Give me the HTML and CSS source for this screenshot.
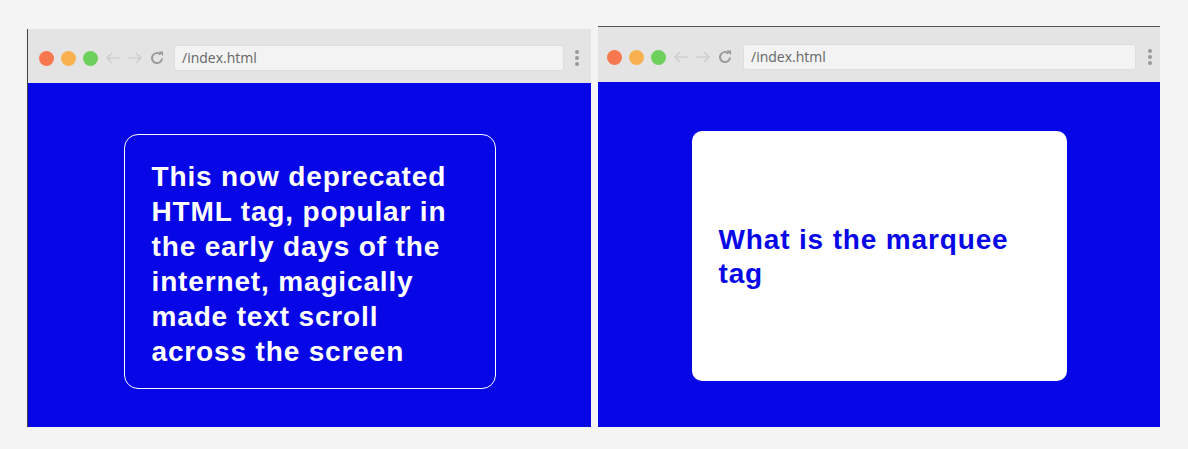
FILE: index.html
```html
<!DOCTYPE html>
<html>
<head>
<meta charset="utf-8">
<link rel="stylesheet" href="styles.css">
</head>
<body>
<div class="row">
  <div class="browser browser-left">
    <div class="chrome">
      <div class="lights"><span class="dot red"></span><span class="dot orange"></span><span class="dot green"></span></div>
      <div class="navs">
        <svg width="16" height="14" viewBox="0 0 16 14"><path d="M15 7H2M7 2L2 7l5 5" fill="none" stroke="#cfcfcf" stroke-width="1.6"/></svg>
        <svg width="16" height="14" viewBox="0 0 16 14"><path d="M1 7h13M9 2l5 5-5 5" fill="none" stroke="#cfcfcf" stroke-width="1.6"/></svg>
        <svg width="16" height="16" viewBox="0 0 16 16"><path d="M13 8.5A5 5 0 1 1 11.5 4.5" fill="none" stroke="#9a9a9a" stroke-width="2"/><path d="M9.5 1.5h4.5v4.5z" fill="#9a9a9a"/></svg>
      </div>
      <div class="url">/index.html</div>
      <div class="kebab"><i></i><i></i><i></i></div>
    </div>
    <div class="viewport">
      <div class="card card-back">This now deprecated HTML tag, popular in the early days of the internet, magically made text scroll across the screen</div>
    </div>
  </div>
  <div class="browser browser-right">
    <div class="chrome">
      <div class="lights"><span class="dot red"></span><span class="dot orange"></span><span class="dot green"></span></div>
      <div class="navs">
        <svg width="16" height="14" viewBox="0 0 16 14"><path d="M15 7H2M7 2L2 7l5 5" fill="none" stroke="#cfcfcf" stroke-width="1.6"/></svg>
        <svg width="16" height="14" viewBox="0 0 16 14"><path d="M1 7h13M9 2l5 5-5 5" fill="none" stroke="#cfcfcf" stroke-width="1.6"/></svg>
        <svg width="16" height="16" viewBox="0 0 16 16"><path d="M13 8.5A5 5 0 1 1 11.5 4.5" fill="none" stroke="#9a9a9a" stroke-width="2"/><path d="M9.5 1.5h4.5v4.5z" fill="#9a9a9a"/></svg>
      </div>
      <div class="url">/index.html</div>
      <div class="kebab"><i></i><i></i><i></i></div>
    </div>
    <div class="viewport">
      <div class="card card-front">What is the marquee tag</div>
    </div>
  </div>
</div>
</body>
</html>
```
FILE: styles.css
```css
* { box-sizing: border-box; }
html, body { margin: 0; padding: 0; }
body {
  background: #f4f4f4;
  width: 1188px;
  height: 449px;
  font-family: "Liberation Sans", Arial, sans-serif;
}
.row {
  display: flex;
  align-items: flex-start;
  gap: 7px;
  padding: 26px 0 0 27px;
}
.browser {
  display: flex;
  flex-direction: column;
}
.browser-left {
  width: 564px;
  height: 398px;
  margin-top: 3px;
  border-left: 1px solid #444;
}
.browser-right {
  width: 562px;
  height: 401px;
  border-top: 1px solid #555;
}
.chrome {
  background: #e4e4e4;
  height: 54px;
  display: flex;
  align-items: center;
  padding: 4px 0 0 11px;
  flex-shrink: 0;
}
.browser-right .chrome { height: 55px; padding: 5px 0 0 9px; }
.lights { display: flex; gap: 7px; }
.dot {
  width: 15px;
  height: 15px;
  border-radius: 50%;
  display: block;
}
.red { background: #f7784e; }
.orange { background: #f9b150; }
.green { background: #6dcf5c; }
.navs {
  display: flex;
  align-items: center;
  gap: 6px;
  margin-left: 7px;
}
.url {
  margin-left: 9px;
  width: 390px;
  height: 26px;
  background: #f3f3f3;
  border: 1px solid #dedede;
  border-radius: 3px;
  font-family: "Open Sans", "Liberation Sans", sans-serif;
  font-size: 14px;
  color: #666;
  padding-left: 7px;
  line-height: 24px;
}
.browser-right .url { width: 393px; margin-left: 10px; }
.kebab {
  display: flex;
  flex-direction: column;
  gap: 2px;
  margin-left: 11px;
}
.browser-right .kebab { margin-left: 12px; }
.kebab i {
  width: 4px;
  height: 4px;
  border-radius: 50%;
  background: #999;
  display: block;
}
.viewport {
  flex: 1;
  background: #0606e6;
  display: flex;
  align-items: center;
  justify-content: center;
}
.card {
  font-weight: bold;
  font-size: 28px;
  letter-spacing: 0.85px;
  display: flex;
  align-items: center;
}
.card-back {
  width: 372px;
  height: 255px;
  border: 1px solid #fff;
  border-radius: 14px;
  color: #fff;
  line-height: 35px;
  padding: 6px 30px 0 27px;
  margin-top: 12px;
}
.card-front {
  width: 375px;
  height: 250px;
  background: #fff;
  border-radius: 10px;
  color: #0606e6;
  line-height: 34px;
  padding: 2px 40px 0 27px;
  margin-top: 2px;
}
```
